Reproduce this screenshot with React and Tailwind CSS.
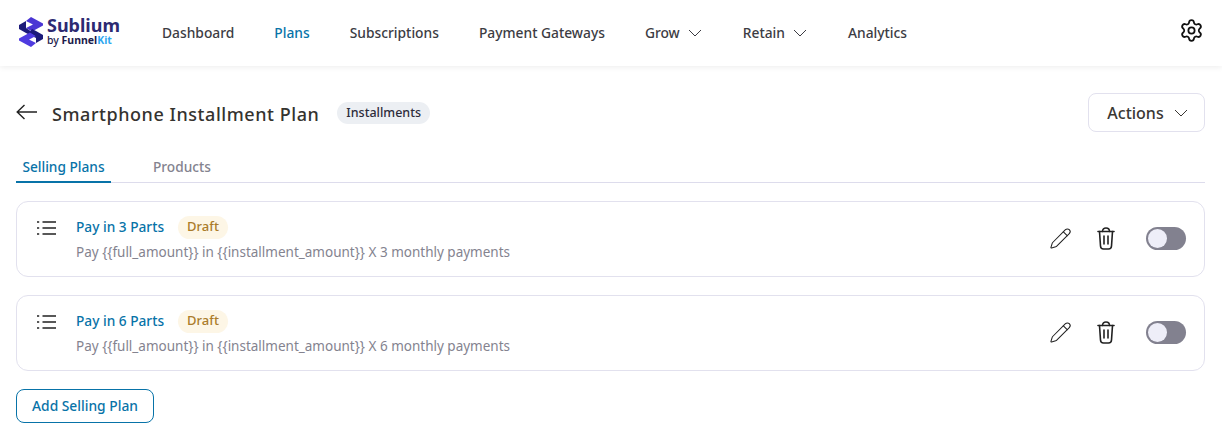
import React from "react";
import { Settings, Pencil } from "lucide-react";

const navItems = [
  { label: "Dashboard" },
  { label: "Plans", active: true },
  { label: "Subscriptions" },
  { label: "Payment Gateways" },
  { label: "Grow", menu: true },
  { label: "Retain", menu: true },
  { label: "Analytics" },
];

const plans = [
  { title: "Pay in 3 Parts", parts: 3 },
  { title: "Pay in 6 Parts", parts: 6 },
];

const Chevron = ({ className }) => (
  <svg width="14" height="8" viewBox="0 0 14 8" fill="none" stroke="currentColor" strokeWidth="1" className={className}>
    <path d="M1 1 L7 7 L13 1" />
  </svg>
);

const ListIcon = () => (
  <svg width="19" height="14" viewBox="0 0 19 14" fill="none" stroke="#222" strokeWidth="1.7" className="shrink-0">
    <path d="M5.5 1 H19 M5.5 7 H19 M5.5 13 H19" />
    <path d="M0 1 H2.2 M0 7 H2.2 M0 13 H2.2" />
  </svg>
);

const TrashIcon = () => (
  <svg width="18" height="23" viewBox="0 0 18 23" fill="none" stroke="#222" strokeWidth="1.6" strokeLinecap="round" strokeLinejoin="round" className="shrink-0">
    <path d="M1 4.5 H17" />
    <path d="M5.5 4.5 C5.5 2 7 1 9 1 C11 1 12.5 2 12.5 4.5" />
    <path d="M2.5 4.5 L3.5 19 C3.6 20.8 4.8 22 6.5 22 H11.5 C13.2 22 14.4 20.8 14.5 19 L15.5 4.5" />
    <path d="M7 9 V17 M11 9 V17" />
  </svg>
);

const Logo = () => (
  <div className="flex items-center gap-[3px] -mt-[3px]">
    <svg width="26" height="32" viewBox="0 0 26 32">
      <path d="M13 1 L25 7.5 L25 9.5 L14 15.5 L8 12 L15 8.5 L8 5 Z" fill="#4a35d4" />
      <path d="M8 5 L1 9 L1 13 L8 17 L18 22 L20 20 L8 12 Z" fill="#1c1a7a" />
      <path d="M13 31 L1 24.5 L1 22.5 L12 16.5 L18 20 L11 23.5 L18 27 Z" fill="#4f3be0" />
      <path d="M18 27 L25 23 L25 19 L18 15 L14 13 L12 16 L18 20 Z" fill="#1c1a7a" />
    </svg>
    <div className="flex flex-col">
      <span className="text-[18px] leading-[18px] font-bold text-[#2d2a72]">Sublium</span>
      <span className="text-[10.5px] leading-[13px] font-bold text-[#1c1b4b]">
        <span className="font-medium">by </span>Funnel<span className="text-[#2fa8f0]">Kit</span>
      </span>
    </div>
  </div>
);

const Toggle = () => (
  <div className="w-10 h-[23px] rounded-full bg-[#82818f] flex items-center px-[2px]">
    <div className="w-[19px] h-[19px] rounded-full bg-[#eeeef8]" />
  </div>
);

const PlanCard = ({ title, parts }) => (
  <div className="border border-[#e2e1ee] rounded-xl bg-white h-[76px] flex items-center pl-[20px] pr-[18px]">
    <div className="-mt-[23px]">
      <ListIcon />
    </div>
    <div className="ml-[20px] flex-1">
      <div className="flex items-center -mt-[1px]">
        <span className="text-[13.7px] font-medium text-[#0873a8]">{title}</span>
        <span className="ml-[14px] px-[9px] h-[23px] flex items-center rounded-full bg-[#fdf6e6] text-[13px] font-medium text-[#ab7c2a]">
          Draft
        </span>
      </div>
      <div className="text-[13.5px] leading-5 text-[#84838f] mt-[3px]">
        {"Pay {{full_amount}} in {{installment_amount}} X " + parts + " monthly payments"}
      </div>
    </div>
    <Pencil size={23} strokeWidth={1.1} className="text-[#222] -mt-[1px]" />
    <div className="ml-[25px] -mt-[2px]">
      <TrashIcon />
    </div>
    <div className="ml-[31px] -mt-[2px]">
      <Toggle />
    </div>
  </div>
);

const App = () => {
  return (
    <div className="w-[1222px] h-[443px] bg-white overflow-hidden font-['Noto_Sans',sans-serif]">
      <header className="h-[66px] bg-white shadow-[0_1px_6px_rgba(0,0,0,0.08)] flex items-center pl-[18px] pr-[19px]">
        <Logo />
        <nav className="ml-[42px] flex items-center gap-10 flex-1">
          {navItems.map((item) => (
            <div
              key={item.label}
              className={`flex items-center text-[13.8px] font-medium ${item.active ? "text-[#0873a8]" : "text-[#3c3c43]"}`}
            >
              {item.label}
              {item.menu && <Chevron className="ml-2 mr-[1px]" />}
            </div>
          ))}
        </nav>
        <Settings size={25} strokeWidth={1.7} className="text-[#111] -mt-[6px] -mr-[1px]" />
      </header>

      <main className="pl-4 pr-[17px]">
        <div className="h-[39px] mt-[27px] flex items-center">
          <svg width="21" height="16" viewBox="0 0 21 16" fill="none" stroke="#222" strokeWidth="1.4" className="shrink-0 -mt-[2px]">
            <path d="M21 8 H1 M8.5 1 L1.2 8 L8.5 15" />
          </svg>
          <h1 className="ml-[15px] text-lg font-medium text-[#35332f] tracking-[0.55px] mt-[2px]">Smartphone Installment Plan</h1>
          <span className="ml-[18px] mt-[1px] px-[9px] h-[22px] flex items-center rounded-full bg-[#eceff3] text-[12.5px] font-medium text-[#2c2c3a]">
            Installments
          </span>
          <button className="ml-auto w-[117px] h-[39px] pl-[2px] pt-[1px] border border-[#e2e1ee] rounded-lg flex items-center justify-center gap-[10px] text-base font-medium text-[#3a3733]">
            Actions
            <Chevron />
          </button>
        </div>

        <div className="mt-[17px] flex h-[34px] border-b border-[#dddcec] text-[13.7px] font-medium">
          <div className="w-[95px] h-[34px] border-b-2 border-[#0873a8] text-center text-[#0873a8] leading-[36px]">
            Selling Plans
          </div>
          <div className="ml-[42px] text-[#84838f] leading-[36px]">Products</div>
        </div>

        <div className="mt-[18px] flex flex-col gap-[18px]">
          {plans.map((plan) => (
            <PlanCard key={plan.parts} {...plan} />
          ))}
        </div>

        <button className="mt-[18px] w-[138px] h-[34px] border border-[#0873a8] rounded-lg text-[13.8px] font-medium text-[#0873a8]">
          Add Selling Plan
        </button>
      </main>
    </div>
  );
};

export default App;
